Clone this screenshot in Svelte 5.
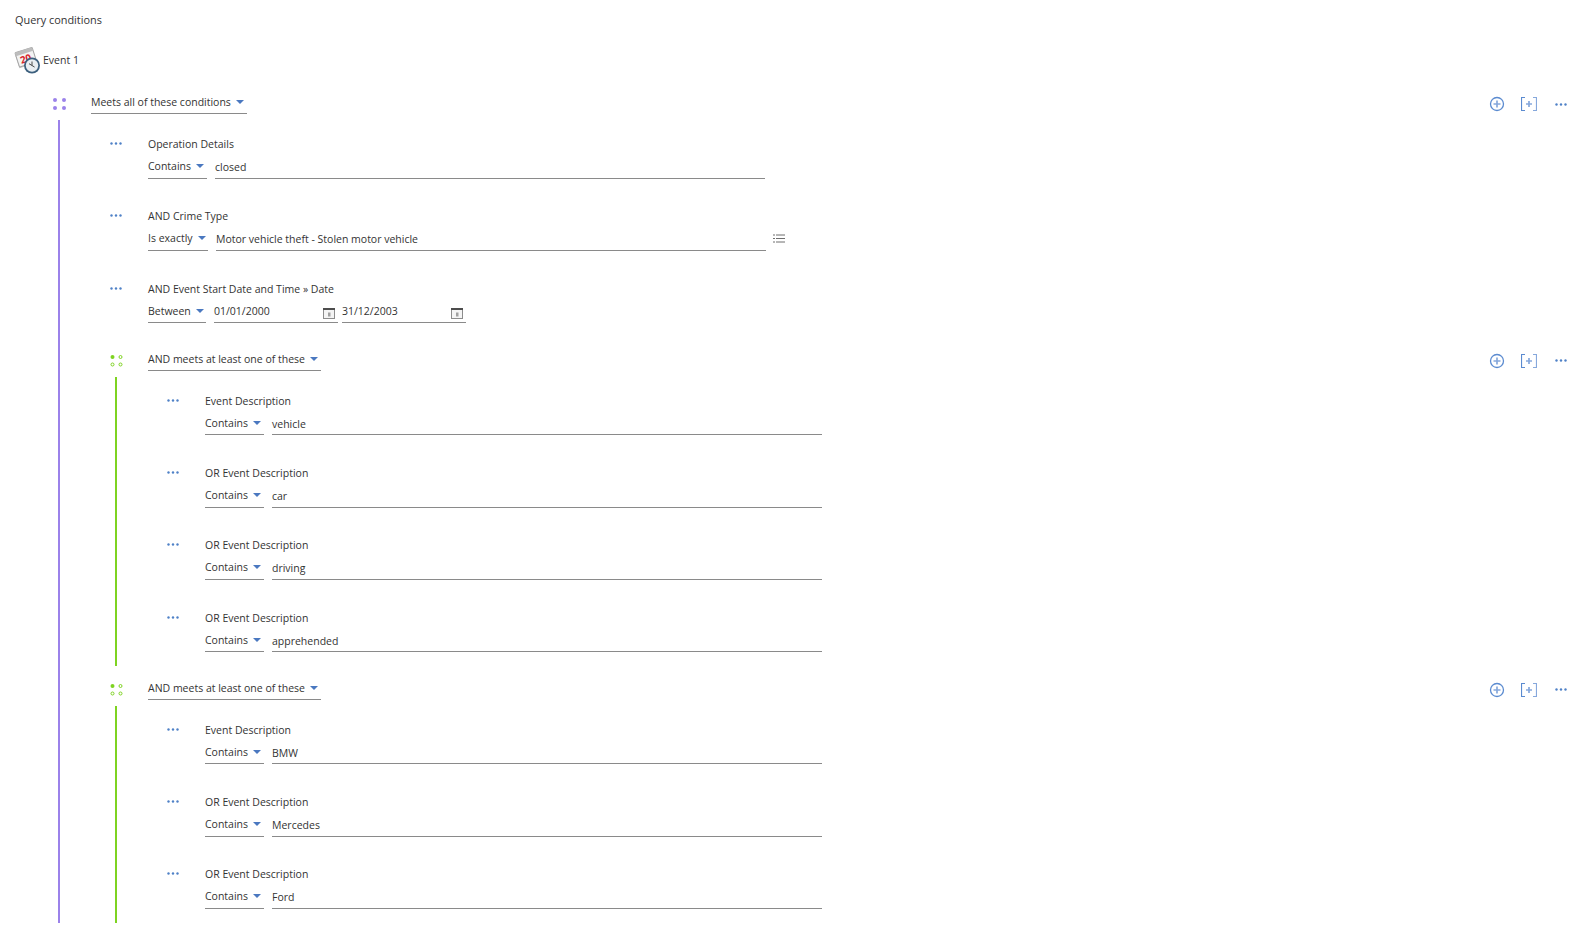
<script>
  const contains = { op: 'Contains', w: 59, vw: 550 };
  const rows1 = [
    { kind: 'row', label: 'Operation Details', val: 'closed', ...contains },
    { kind: 'row', label: 'AND Crime Type', op: 'Is exactly', w: 60, val: 'Motor vehicle theft - Stolen motor vehicle', vw: 550, list: true },
    { kind: 'date', label: 'AND Event Start Date and Time » Date', op: 'Between', w: 58, from: '01/01/2000', to: '31/12/2003' },
    { kind: 'group', title: 'AND meets at least one of these', w: 173, items: [
      { kind: 'row', label: 'Event Description', val: 'vehicle', ...contains },
      { kind: 'row', label: 'OR Event Description', val: 'car', ...contains },
      { kind: 'row', label: 'OR Event Description', val: 'driving', ...contains },
      { kind: 'row', label: 'OR Event Description', val: 'apprehended', ...contains }
    ]},
    { kind: 'group', title: 'AND meets at least one of these', w: 173, items: [
      { kind: 'row', label: 'Event Description', val: 'BMW', ...contains },
      { kind: 'row', label: 'OR Event Description', val: 'Mercedes', ...contains },
      { kind: 'row', label: 'OR Event Description', val: 'Ford', ...contains }
    ]}
  ];
</script>

{#snippet dots()}
  <svg class="dots" width="12" height="3" viewBox="0 0 12 3" aria-hidden="true">
    <circle cx="1.5" cy="1.5" r="1.2" /><circle cx="6" cy="1.5" r="1.2" /><circle cx="10.5" cy="1.5" r="1.2" />
  </svg>
{/snippet}

{#snippet caret()}
  <svg class="caret" width="8" height="4" viewBox="0 0 8 4" aria-hidden="true"><path d="M0 0h8L4 4z" /></svg>
{/snippet}

{#snippet calendar()}
  <svg class="cal" width="12" height="11" viewBox="0 0 12 11" aria-hidden="true">
    <rect x=".5" y=".5" width="11" height="10" fill="#f4f4f4" stroke="#8c8c8c" />
    <rect x="0" y="0" width="12" height="2" fill="#4d4d4d" />
    <rect x="5" y="4.5" width="2.5" height="4" fill="#a0a0a0" />
  </svg>
{/snippet}

{#snippet group(g, level)}
  <section class="group">
    <div class="grip-cell">
      {#if level === 0}
        <svg width="13" height="12" viewBox="0 0 13 12" aria-hidden="true" fill="#9b82ea">
          <circle cx="2" cy="2" r="2" /><circle cx="11" cy="2" r="2" /><circle cx="2" cy="10" r="2" /><circle cx="11" cy="10" r="2" />
        </svg>
      {:else}
        <svg width="13" height="12" viewBox="0 0 13 12" aria-hidden="true" fill="none" stroke="#7ed321">
          <circle cx="2.5" cy="2" r="2" fill="#7ed321" stroke="none" /><circle cx="10.5" cy="2" r="1.5" /><circle cx="2.5" cy="9.5" r="1.5" /><circle cx="10.5" cy="9.5" r="1.5" />
        </svg>
      {/if}
    </div>
    <div class="head">
      <div class="select head-select" style="width:{g.w}px"><span>{g.title}</span>{@render caret()}</div>
      <div class="actions">
        <svg width="16" height="16" viewBox="0 0 16 16" aria-hidden="true" fill="none" stroke="#5b8bd0">
          <circle cx="8" cy="8" r="6.5" stroke-width="1.3" /><path d="M8 4.5v7M4.5 8h7" stroke-width="1.7" stroke="#86a8dc" />
        </svg>
        <svg width="16" height="14" viewBox="0 0 16 14" aria-hidden="true" fill="none" stroke="#5b8bd0">
          <path d="M4 .5H.5v13H4" stroke-width="1.2" /><path d="M12 .5h3.5v13H12" stroke-width="1.2" stroke="#86a8dc" /><path d="M8 4v6M5 7h6" stroke-width="1.7" stroke="#86a8dc" />
        </svg>
        {@render dots()}
      </div>
    </div>
    <div class="rail {level === 0 ? 'purple' : 'green'}"></div>
    <div class="body">
      {#each g.items as item}
        {#if item.kind === 'group'}
          {@render group(item, level + 1)}
        {:else}
          <div class="row">
            <div class="row-dots">{@render dots()}</div>
            <div class="fields">
              <div class="label">{item.label}</div>
              <div class="controls">
                <div class="select" style="width:{item.w}px"><span>{item.op}</span>{@render caret()}</div>
                {#if item.kind === 'date'}
                  <div class="input date"><span>{item.from}</span>{@render calendar()}</div>
                  <div class="input date second"><span>{item.to}</span>{@render calendar()}</div>
                {:else}
                  <div class="input value" style="width:{item.vw}px">{item.val}</div>
                  {#if item.list}
                    <svg class="list" width="12" height="9" viewBox="0 0 12 9" aria-hidden="true" stroke="#6e6e6e">
                      <path d="M0 1h2M3 1h9M0 4.5h2M3 4.5h9M0 8h2M3 8h9" />
                    </svg>
                  {/if}
                {/if}
              </div>
            </div>
          </div>
        {/if}
      {/each}
    </div>
  </section>
{/snippet}

<main class="page">
  <h1 class="title">Query conditions</h1>
  <div class="event">
    <svg width="26" height="27" viewBox="0 0 26 27" aria-hidden="true">
      <g transform="rotate(-18 11 11)">
        <rect x="2.5" y="6" width="18" height="13" fill="#c4c4c4" />
        <rect x="3" y="3" width="18" height="15" rx="1" fill="#f3f3f3" stroke="#a5a5a5" />
        <rect x="3" y="3" width="18" height="3.5" fill="#bdbdbd" />
        <text x="11.5" y="15.5" font-size="10" font-weight="700" text-anchor="middle" fill="#d9252a" font-family="Open Sans">20</text>
      </g>
      <circle cx="18" cy="18.5" r="8" fill="#3c5f7d" />
      <circle cx="18" cy="18.5" r="6.2" fill="#e9eef2" />
      <path d="M18 14.5v4l-3-1.8M18 18.5l2.6 1.6" fill="none" stroke="#4a4a4a" stroke-width="1" />
    </svg>
    <span>Event 1</span>
  </div>
  {@render group({ title: 'Meets all of these conditions', w: 156, items: rows1 }, 0)}
</main>

<style>
  :global(html), :global(body) { margin: 0; background: #fff; overflow: hidden; }
  .page {
    height: 923px;
    overflow: hidden;
    box-sizing: border-box;
    padding: 10px 21px 0 0;
    font: 10.5px/22px "Open Sans", "Noto Sans", sans-serif;
    color: #333;
  }
  .title { margin: 0 0 13px 15px; font: inherit; font-size: 10.9px; line-height: 20px; color: #333; }
  .event { display: flex; align-items: center; gap: 3px; height: 34px; margin: 0 0 14px 14px; color: #333; }
  .page > .group { margin-left: 31px; }
  .group { display: grid; grid-template-columns: 57px 1fr; margin-bottom: 10.6px; }
  .grip-cell { display: flex; justify-content: center; padding-top: 7px; height: 16px; margin-right: 1px; }
  .head { display: flex; justify-content: space-between; align-items: flex-start; padding-left: 3px; height: 23px; margin-bottom: 6px; }
  .actions { display: flex; align-items: center; gap: 16px; height: 16px; margin-top: 5px; }
  .actions .dots { margin-left: 2px; }
  .dots { fill: #4f81c7; display: block; }
  .select {
    box-sizing: border-box;
    display: flex;
    align-items: flex-start;
    height: 23.6px;
    border-bottom: 1px solid #8a8a8a;
    white-space: nowrap;
  }
  .head-select { height: 23px; }
  .caret { fill: #4a78c0; margin: 9px 0 0 5px; flex: none; }
  .rail { width: 2px; justify-self: center; margin-right: 1px; }
  .purple { background: #9b82ea; }
  .green { background: #7ed321; }
  .body { padding: 13px 0 14px; min-width: 0; }
  .group:last-child > .body { padding-bottom: 40px; }
  .row { display: grid; grid-template-columns: 57px 1fr; height: 45.6px; margin-bottom: 26.7px; }
  .row:last-child { margin-bottom: 0; }
  .row + .group { margin-top: -2px; }
  .group:last-child { margin-bottom: 0; }
  .row-dots { display: flex; justify-content: center; padding-top: 9px; margin-right: 1px; }
  .fields { padding-left: 3px; }
  .label { height: 22px; white-space: nowrap; }
  .controls { display: flex; gap: 8px; align-items: flex-start; height: 23.6px; }
  .input {
    box-sizing: border-box;
    height: 23.6px;
    border-bottom: 1px solid #8a8a8a;
    white-space: nowrap;
  }
  .value { padding-top: 1px; line-height: 22px; }
  .date { display: flex; justify-content: space-between; width: 124px; padding-right: 3px; }
  .date.second { margin-left: -4px; }
  .cal { margin-top: 8px; }
  .list { margin: 7px 0 0 -1px; }
</style>
